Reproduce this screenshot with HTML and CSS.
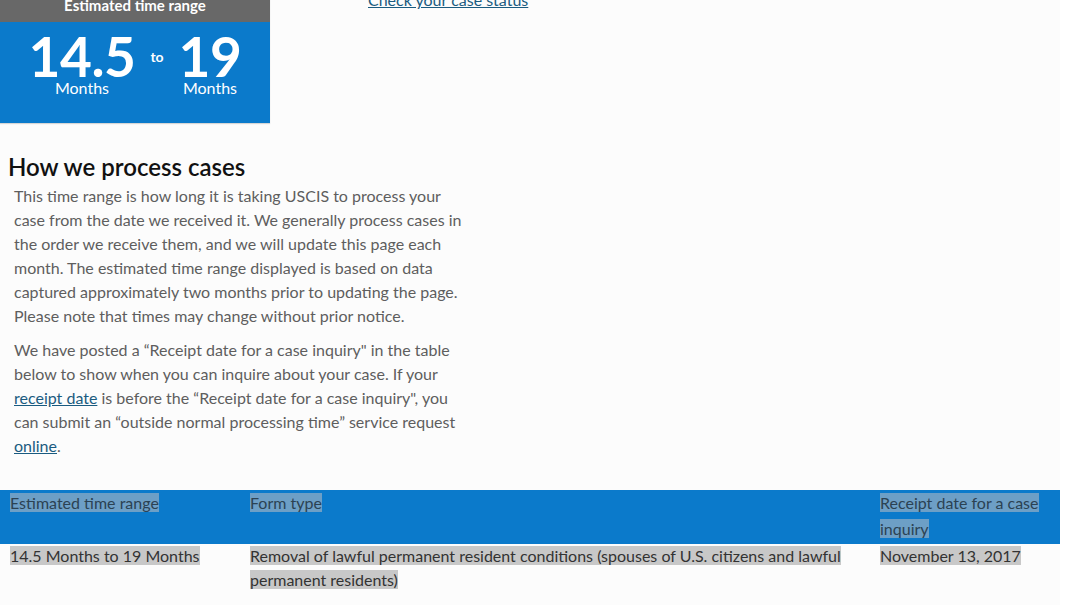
FILE: index.html
```html
<!DOCTYPE html>
<html>
<head>
  <link rel="stylesheet" href="styles.css">
</head>
<body>
  <div class="page">
    <div class="top">
      <div class="stat-card">
        <div class="stat-title">Estimated time range</div>
        <div class="stat-body">
          <div class="stat-num">
            <span class="big">14.5</span>
            <span class="unit">Months</span>
          </div>
          <span class="to">to</span>
          <div class="stat-num">
            <span class="big">19</span>
            <span class="unit">Months</span>
          </div>
        </div>
      </div>
      <div class="status-link">
        <a href="#">Check your case status</a>
      </div>
    </div>

    <section class="process">
      <h2>How we process cases</h2>
      <p>This time range is how long it is taking USCIS to process your case from the date we received it. We generally process cases in the order we receive them, and we will update this page each month. The estimated time range displayed is based on data captured approximately two months prior to updating the page. Please note that times may change without prior notice.</p>
      <p>We have posted a &ldquo;Receipt date for a case inquiry" in the table below to show when you can inquire about your case. If your <a href="#">receipt date</a> is before the &ldquo;Receipt date for a case inquiry", you can submit an &ldquo;outside normal processing time&rdquo; service request <a href="#">online</a>.</p>
    </section>

    <table class="times">
      <thead>
        <tr>
          <th class="col-range"><span class="sel">Estimated time range</span></th>
          <th class="col-form"><span class="sel">Form type</span></th>
          <th class="col-date"><span class="sel">Receipt date for a case inquiry</span></th>
        </tr>
      </thead>
      <tbody>
        <tr>
          <td><span class="sel">14.5 Months to 19 Months</span></td>
          <td><span class="sel">Removal of lawful permanent resident conditions (spouses of U.S. citizens and lawful permanent residents)</span></td>
          <td><span class="sel">November 13, 2017</span></td>
        </tr>
      </tbody>
    </table>
  </div>
</body>
</html>
```

FILE: styles.css
```css
body {
  margin: 0;
  background: #fff;
  font-family: Lato, "Open Sans", sans-serif;
  color: #5e5e5e;
}

.page {
  width: 1060px;
  margin-top: -12px;
  background: #fcfcfc;
  padding-bottom: 20px;
}

.top {
  display: flex;
  gap: 98px;
}

.stat-card {
  width: 270px;
  color: #fff;
  box-shadow: 0 1px 1px rgba(0, 0, 0, 0.15);
}

.stat-title {
  height: 34px;
  background: #686868;
  text-align: center;
  font-weight: 700;
  font-size: 15px;
  line-height: 34px;
}

.stat-body {
  height: 101px;
  background: #0b7acb;
  display: flex;
  justify-content: center;
  align-items: flex-start;
  gap: 15px;
  padding-top: 9px;
  box-sizing: border-box;
}

.stat-num {
  display: flex;
  flex-direction: column;
  align-items: center;
}

.big {
  font-size: 55px;
  font-weight: 700;
  line-height: 50px;
  letter-spacing: -0.5px;
}

.unit {
  font-size: 16px;
  line-height: 14px;
}

.to {
  font-size: 14px;
  font-weight: 700;
  margin-top: 17px;
}

.status-link {
  padding-top: 2px;
  font-size: 16px;
}

a {
  color: #1a5b80;
}

.process {
  width: 470px;
  padding-top: 30px;
}

h2 {
  margin: 0 0 3px 8px;
  font-size: 24px;
  font-weight: 600;
  line-height: 28px;
  color: #111;
}

.process p {
  margin: 0 0 10px 14px;
  font-size: 16px;
  line-height: 24px;
}

.times {
  width: 1060px;
  margin-top: 32px;
  border-collapse: collapse;
  font-size: 16px;
  color: #333;
}

.times th {
  background: #0b7acb;
  font-weight: 400;
  text-align: left;
  vertical-align: top;
  line-height: 26px;
  padding: 0 0 2px 10px;
}

.times td {
  vertical-align: top;
  line-height: 24px;
  padding: 0 0 0 10px;
}

.col-range {
  width: 230px;
}

.col-form {
  width: 620px;
}

.times th .sel {
  background: #6d9fc6;
  color: #2b4253;
}

.times td .sel {
  background: #c8c8c8;
}
```
